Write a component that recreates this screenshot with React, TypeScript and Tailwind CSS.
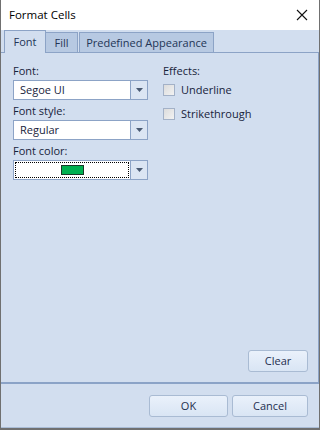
import type { ReactNode } from "react";

const font = { fontFamily: '"Segoe UI", "Open Sans", "Noto Sans", sans-serif' };

function DropArrow() {
  return (
    <svg width="7" height="4" viewBox="0 0 7 4" className="block">
      <path d="M0 0H7L3.5 4Z" fill="#4a5a72" />
    </svg>
  );
}

function Combo({ children, focused }: { children: ReactNode; focused?: boolean }) {
  return (
    <div className="flex h-[20px] w-[135px] border border-[#8ca3c6] bg-white">
      <div className="flex flex-1 items-center p-[1px]">
        <div
          className={
            "flex h-full w-full items-center pl-[4px] " +
            (focused ? "border border-dotted border-black" : "border border-transparent")
          }
        >
          {children}
        </div>
      </div>
      <div className="flex w-[17px] items-center justify-center border-l border-[#8ca3c6] bg-[#dbe5f3]">
        <DropArrow />
      </div>
    </div>
  );
}

function Check({ label }: { label: string }) {
  return (
    <div className="flex h-[24px] items-center gap-[6px]">
      <div className="h-[12px] w-[12px] border border-[#a3b1c7] bg-gradient-to-br from-[#dcdcdc] to-[#f2f2f2]" />
      <span>{label}</span>
    </div>
  );
}

function Button({ children, w }: { children: ReactNode; w: string }) {
  return (
    <button
      className={
        "flex h-[22px] items-center justify-center rounded-[3px] border border-[#a9bbd3] bg-gradient-to-b from-[#eaf1fb] to-[#d9e5f4] text-[#1e2f4f] " +
        w
      }
    >
      {children}
    </button>
  );
}

export default function App() {
  return (
    <div
      style={font}
      className="flex h-[430px] w-[320px] flex-col border-x border-b-2 border-[#707070] text-[11px] leading-[16px] text-[#17233b]"
    >
      <div className="flex h-[30px] shrink-0 items-center justify-between bg-white pl-[8px] pr-[10px] text-[11.5px] text-black">
        <span>Format Cells</span>
        <svg width="12" height="12" viewBox="0 0 12 12" className="mr-[1px]">
          <path d="M1 1L11 11M11 1L1 11" stroke="#111" strokeWidth="1.1" />
        </svg>
      </div>
      <div className="flex flex-1 flex-col bg-[#d2deef]">
        <div className="flex h-[22px] items-end pl-[3px] text-[#233556]">
          <div className="relative z-10 -mb-px flex h-[23px] w-[42px] items-center justify-center border-x border-t border-[#8ca3c6] bg-[#d2deef] pb-[1px]">
            Font
          </div>
          <div className="flex h-[20px] w-[32px] items-center justify-center border-r border-t border-[#8ca3c6] bg-[#b7c9e2] pt-[1px]">
            Fill
          </div>
          <div className="ml-[1px] flex h-[20px] w-[135px] items-center justify-center border-x border-t border-[#8ca3c6] bg-[#b7c9e2] pt-[1px]">
            Predefined Appearance
          </div>
        </div>
        <div className="flex flex-1 flex-col border-r border-t border-[#8ca3c6] px-[12px] pt-[10px] pb-[10px]">
          <div className="flex gap-[15px]">
            <div className="flex flex-col">
              <div className="mb-[1px]">Font:</div>
              <Combo>Segoe UI</Combo>
              <div className="mb-[1px] mt-[3px]">Font style:</div>
              <Combo>Regular</Combo>
              <div className="mb-[1px] mt-[3px]">Font color:</div>
              <Combo focused>
                <div className="flex w-full justify-center pr-[4px]">
                  <div className="h-[10px] w-[23px] border border-[#1a3a2a] bg-[#00b050]" />
                </div>
              </Combo>
            </div>
            <div className="flex flex-col">
              <div className="h-[15px]">Effects:</div>
              <Check label="Underline" />
              <Check label="Strikethrough" />
            </div>
          </div>
          <div className="mt-auto flex justify-end">
            <Button w="w-[60px] -mr-[2px]">Clear</Button>
          </div>
        </div>
        <div className="h-[2px] bg-[#8ba3c7]" />
        <div className="flex h-[44px] items-center justify-end gap-[4px] border-b border-[#a9bcd6] pr-[11px] pt-[1px]">
          <Button w="w-[79px]">OK</Button>
          <Button w="w-[76px]">Cancel</Button>
        </div>
      </div>
    </div>
  );
}
